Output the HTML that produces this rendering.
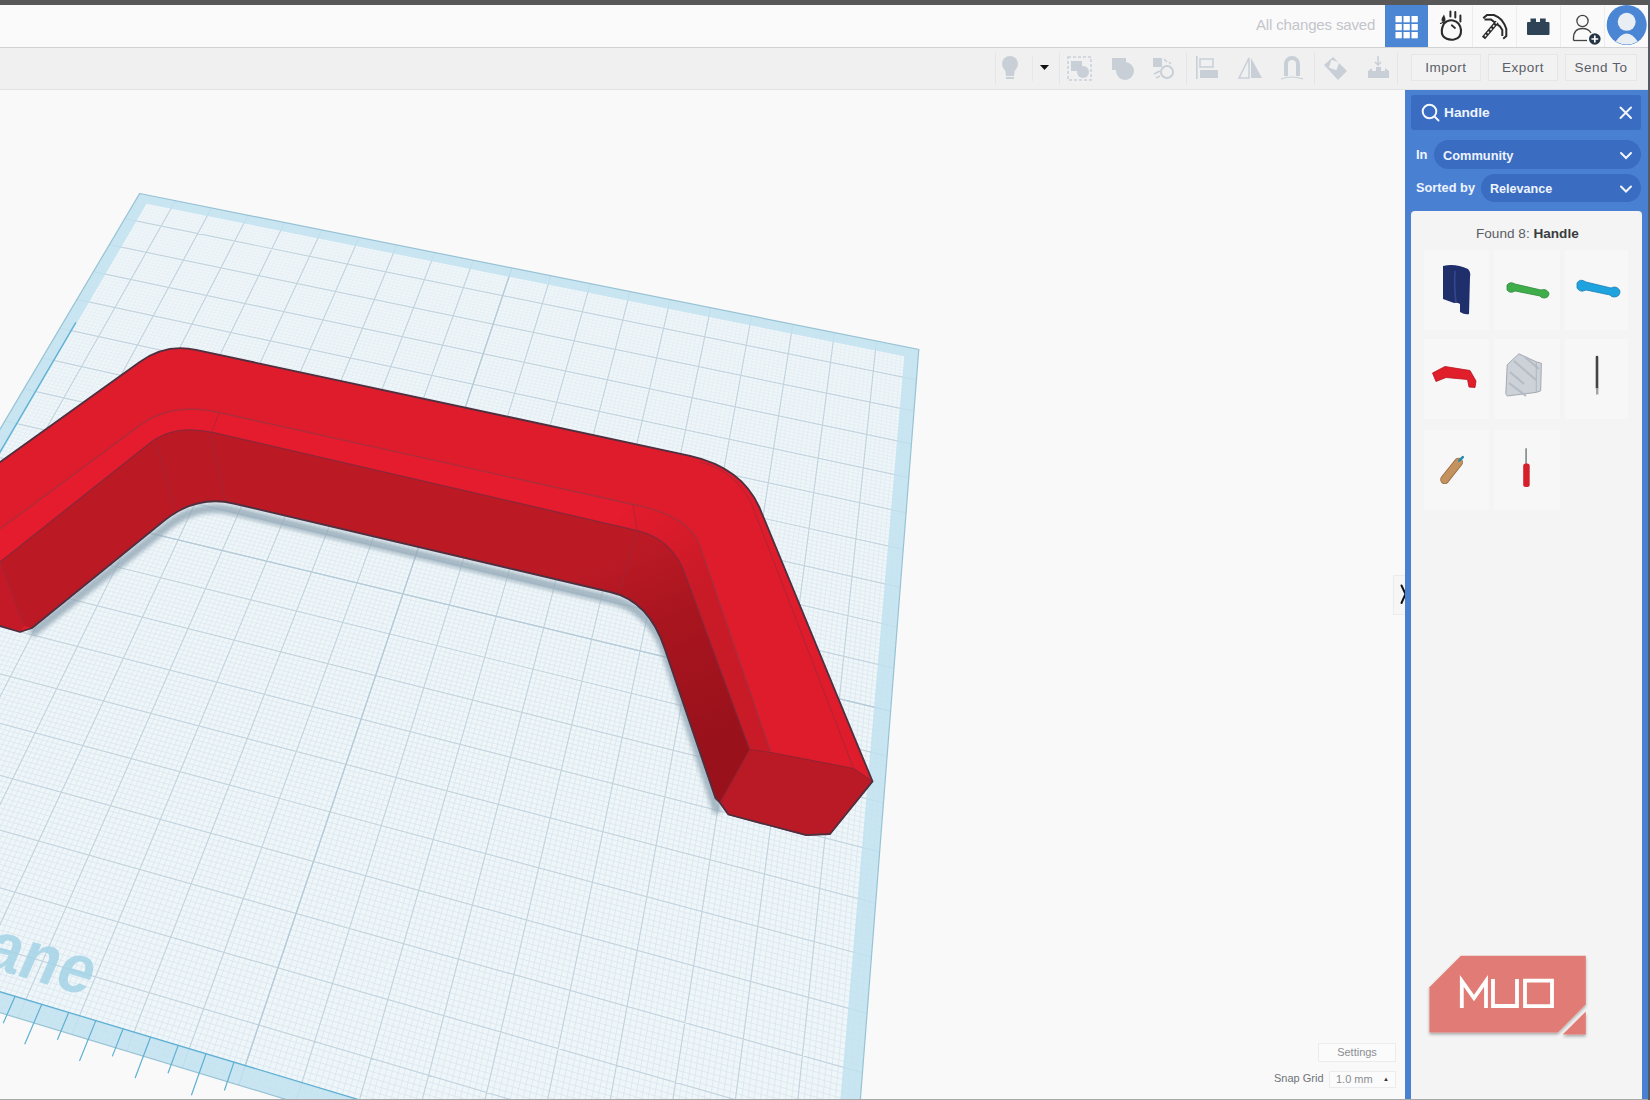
<!DOCTYPE html>
<html><head><meta charset="utf-8">
<style>
*{box-sizing:border-box;margin:0;padding:0}
html,body{width:1650px;height:1100px;overflow:hidden;background:#f9f9f9;font-family:"Liberation Sans",sans-serif}
.a{position:absolute;white-space:nowrap}
#top{left:0;top:0;width:1650px;height:5px;background:#585858}
#bar{left:0;top:5px;width:1650px;height:43px;background:#fafafa;border-bottom:1px solid #d2d2d5}
#tools{left:0;top:48px;width:1650px;height:42px;background:#f0f0f1;border-bottom:1px solid #e3e3e5}
.tb{top:54px;height:27px;border:1px solid #e6e6e8;background:#f2f2f3;font-size:13.5px;color:#5a5e66;text-align:center;line-height:25px;letter-spacing:0.5px}
#panel{left:1405px;top:90px;width:245px;height:1010px;background:#4a80d2;border-right:2px solid #3f6fbf}
.pill{background:#3a6cc1;border-radius:15px}
.wt{color:#eef4ff;font-weight:bold;font-size:13px}
#results{left:1411px;top:211px;width:231px;height:889px;background:#f4f4f5;border-radius:4px 4px 0 0}
</style></head><body>
<svg class="a" style="left:0;top:0" width="1650" height="1100" viewBox="0 0 1650 1100">
<defs>
<linearGradient id="fadeg" gradientUnits="userSpaceOnUse" x1="0" y1="190" x2="0" y2="750"><stop offset="0" stop-color="#fff" stop-opacity="0.3"/><stop offset="1" stop-color="#fff" stop-opacity="1"/></linearGradient>
<mask id="fade" maskUnits="userSpaceOnUse" x="-300" y="0" width="1300" height="1300"><rect x="-300" y="0" width="1300" height="1300" fill="url(#fadeg)"/></mask>
<filter id="blur2" x="-5%" y="-5%" width="110%" height="110%"><feGaussianBlur stdDeviation="2"/></filter>
<linearGradient id="wallg" gradientUnits="userSpaceOnUse" x1="610" y1="560" x2="690" y2="760">
<stop offset="0" stop-color="#bb1a25"/><stop offset="0.35" stop-color="#a9151f"/><stop offset="1" stop-color="#98111b"/>
</linearGradient>
<linearGradient id="bandg" gradientUnits="userSpaceOnUse" x1="625" y1="505" x2="700" y2="590">
<stop offset="0" stop-color="#e51c2d"/><stop offset="1" stop-color="#c81a27"/>
</linearGradient>
</defs>
<polygon points="139.7,193.5 918.8,349.4 847.1,1269.6 -293.0,923.8" fill="#eff6f9"/>
<path d="M143.3,194.2L-288.0,925.3M138.2,196.0L918.5,352.4M146.8,195.0L-283.1,926.8M136.8,198.5L918.3,355.4M150.4,195.7L-278.1,928.3M135.3,201.0L918.1,358.4M154.0,196.4L-273.0,929.8M133.8,203.5L917.8,361.4M157.6,197.1L-268.0,931.3M132.3,206.0L917.6,364.5M161.1,197.8L-263.0,932.9M130.8,208.5L917.4,367.5M164.7,198.5L-258.0,934.4M129.3,211.1L917.1,370.5M168.3,199.3L-253.0,935.9M127.8,213.6L916.9,373.6M171.9,200.0L-247.9,937.4M126.3,216.1L916.6,376.7M179.1,201.4L-237.8,940.5M123.3,221.3L916.2,382.9M182.7,202.1L-232.8,942.0M121.8,223.8L915.9,386.0M186.3,202.9L-227.7,943.6M120.2,226.4L915.7,389.1M189.9,203.6L-222.7,945.1M118.7,229.0L915.4,392.2M193.5,204.3L-217.6,946.7M117.2,231.6L915.2,395.3M197.1,205.0L-212.5,948.2M115.6,234.2L914.9,398.5M200.7,205.7L-207.4,949.7M114.1,236.8L914.7,401.7M204.3,206.5L-202.3,951.3M112.5,239.4L914.4,404.8M207.9,207.2L-197.2,952.8M111.0,242.0L914.2,408.0M215.2,208.6L-187.0,955.9M107.8,247.3L913.7,414.4M218.8,209.4L-181.9,957.5M106.2,250.0L913.4,417.6M222.5,210.1L-176.7,959.0M104.7,252.7L913.2,420.9M226.1,210.8L-171.6,960.6M103.1,255.3L912.9,424.1M229.7,211.5L-166.5,962.2M101.5,258.0L912.7,427.4M233.4,212.3L-161.3,963.7M99.9,260.7L912.4,430.6M237.0,213.0L-156.2,965.3M98.3,263.4L912.2,433.9M240.7,213.7L-151.0,966.8M96.7,266.1L911.9,437.2M244.3,214.5L-145.8,968.4M95.1,268.8L911.7,440.5M251.6,215.9L-135.5,971.6M91.8,274.3L911.1,447.2M255.3,216.7L-130.3,973.1M90.2,277.0L910.9,450.5M258.9,217.4L-125.1,974.7M88.6,279.8L910.6,453.9M262.6,218.1L-119.9,976.3M86.9,282.6L910.4,457.2M266.3,218.9L-114.7,977.9M85.3,285.3L910.1,460.6M270.0,219.6L-109.5,979.4M83.6,288.1L909.8,464.0M273.6,220.3L-104.3,981.0M82.0,290.9L909.6,467.4M277.3,221.1L-99.0,982.6M80.3,293.7L909.3,470.8M281.0,221.8L-93.8,984.2M78.7,296.5L909.0,474.2M288.4,223.3L-83.3,987.4M75.3,302.2L908.5,481.1M292.1,224.0L-78.1,989.0M73.6,305.0L908.2,484.6M295.8,224.8L-72.8,990.6M71.9,307.9L908.0,488.1M299.5,225.5L-67.5,992.2M70.2,310.8L907.7,491.6M303.2,226.2L-62.3,993.8M68.5,313.6L907.4,495.1M306.9,227.0L-57.0,995.4M66.8,316.5L907.1,498.6M310.6,227.7L-51.7,997.0M65.1,319.4L906.9,502.2M314.3,228.5L-46.4,998.6M63.4,322.3L906.6,505.7M318.0,229.2L-41.1,1000.2M61.7,325.2L906.3,509.3M325.4,230.7L-30.5,1003.4M58.2,331.1L905.8,516.4M329.2,231.4L-25.2,1005.0M56.5,334.0L905.5,520.0M332.9,232.2L-19.8,1006.6M54.7,337.0L905.2,523.7M336.6,232.9L-14.5,1008.3M52.9,339.9L904.9,527.3M340.4,233.7L-9.2,1009.9M51.2,342.9L904.6,530.9M344.1,234.4L-3.8,1011.5M49.4,345.9L904.3,534.6M347.8,235.2L1.6,1013.1M47.6,348.9L904.1,538.3M351.6,235.9L6.9,1014.8M45.9,351.9L903.8,542.0M355.3,236.7L12.3,1016.4M44.1,354.9L903.5,545.7M362.8,238.2L23.0,1019.6M40.5,361.0L902.9,553.1M366.6,238.9L28.4,1021.3M38.7,364.0L902.6,556.9M370.4,239.7L33.8,1022.9M36.9,367.1L902.3,560.6M374.1,240.4L39.2,1024.6M35.0,370.2L902.0,564.4M377.9,241.2L44.7,1026.2M33.2,373.2L901.7,568.2M381.7,241.9L50.1,1027.8M31.4,376.3L901.4,572.0M385.4,242.7L55.5,1029.5M29.5,379.4L901.1,575.8M389.2,243.5L60.9,1031.1M27.7,382.5L900.8,579.7M393.0,244.2L66.4,1032.8M25.8,385.7L900.5,583.5M400.6,245.7L77.3,1036.1M22.1,392.0L899.9,591.3M404.3,246.5L82.8,1037.8M20.2,395.1L899.6,595.2M408.1,247.2L88.2,1039.4M18.4,398.3L899.3,599.1M411.9,248.0L93.7,1041.1M16.5,401.5L899.0,603.0M415.7,248.8L99.2,1042.7M14.6,404.7L898.7,607.0M419.5,249.5L104.7,1044.4M12.7,407.9L898.4,611.0M423.4,250.3L110.2,1046.1M10.8,411.1L898.1,614.9M427.2,251.1L115.7,1047.7M8.9,414.3L897.8,618.9M431.0,251.8L121.2,1049.4M6.9,417.6L897.5,623.0M438.6,253.3L132.3,1052.8M3.1,424.1L896.8,631.0M442.4,254.1L137.8,1054.5M1.1,427.4L896.5,635.1M446.3,254.9L143.3,1056.1M-0.8,430.7L896.2,639.2M450.1,255.6L148.9,1057.8M-2.8,434.0L895.9,643.3M453.9,256.4L154.4,1059.5M-4.8,437.3L895.6,647.4M457.8,257.2L160.0,1061.2M-6.7,440.6L895.2,651.5M461.6,257.9L165.6,1062.9M-8.7,444.0L894.9,655.7M465.5,258.7L171.2,1064.6M-10.7,447.3L894.6,659.8M469.3,259.5L176.8,1066.3M-12.7,450.7L894.3,664.0M477.0,261.0L187.9,1069.7M-16.7,457.5L893.6,672.4M480.9,261.8L193.6,1071.4M-18.7,460.9L893.3,676.7M484.7,262.6L199.2,1073.1M-20.7,464.3L892.9,680.9M488.6,263.3L204.8,1074.8M-22.8,467.7L892.6,685.2M492.5,264.1L210.4,1076.5M-24.8,471.2L892.3,689.5M496.3,264.9L216.1,1078.2M-26.9,474.6L891.9,693.8M500.2,265.7L221.7,1079.9M-28.9,478.1L891.6,698.1M504.1,266.4L227.4,1081.6M-31.0,481.6L891.3,702.5M508.0,267.2L233.0,1083.3M-33.1,485.1L890.9,706.8M515.7,268.8L244.4,1086.8M-37.2,492.1L890.2,715.6M519.6,269.6L250.1,1088.5M-39.3,495.6L889.9,720.0M523.5,270.3L255.8,1090.2M-41.4,499.2L889.6,724.5M527.4,271.1L261.5,1092.0M-43.5,502.7L889.2,728.9M531.3,271.9L267.2,1093.7M-45.7,506.3L888.9,733.4M535.2,272.7L272.9,1095.4M-47.8,509.9L888.5,737.9M539.2,273.5L278.6,1097.2M-49.9,513.5L888.2,742.4M543.1,274.2L284.4,1098.9M-52.1,517.1L887.8,746.9M547.0,275.0L290.1,1100.7M-54.2,520.8L887.4,751.5M554.8,276.6L301.6,1104.1M-58.6,528.1L886.7,760.7M558.8,277.4L307.4,1105.9M-60.7,531.8L886.4,765.3M562.7,278.2L313.1,1107.6M-62.9,535.5L886.0,769.9M566.6,279.0L318.9,1109.4M-65.1,539.2L885.6,774.6M570.6,279.7L324.7,1111.2M-67.3,542.9L885.3,779.2M574.5,280.5L330.5,1112.9M-69.5,546.6L884.9,783.9M578.4,281.3L336.3,1114.7M-71.8,550.4L884.6,788.7M582.4,282.1L342.1,1116.4M-74.0,554.1L884.2,793.4M586.4,282.9L347.9,1118.2M-76.2,557.9L883.8,798.2M594.3,284.5L359.6,1121.7M-80.7,565.5L883.1,807.7M598.2,285.3L365.4,1123.5M-83.0,569.3L882.7,812.6M602.2,286.1L371.3,1125.3M-85.3,573.2L882.3,817.4M606.2,286.9L377.1,1127.1M-87.6,577.0L881.9,822.3M610.1,287.7L383.0,1128.8M-89.9,580.9L881.6,827.2M614.1,288.5L388.9,1130.6M-92.2,584.8L881.2,832.1M618.1,289.3L394.8,1132.4M-94.5,588.7L880.8,837.0M622.1,290.1L400.7,1134.2M-96.8,592.6L880.4,842.0M626.1,290.9L406.6,1136.0M-99.1,596.6L880.0,846.9M634.1,292.5L418.4,1139.6M-103.8,604.5L879.2,857.0M638.1,293.3L424.3,1141.4M-106.2,608.5L878.8,862.0M642.1,294.1L430.2,1143.2M-108.6,612.5L878.4,867.1M646.1,294.9L436.2,1145.0M-110.9,616.5L878.0,872.2M650.1,295.7L442.1,1146.8M-113.3,620.5L877.6,877.3M654.1,296.5L448.1,1148.6M-115.7,624.6L877.2,882.4M658.1,297.3L454.0,1150.4M-118.1,628.6L876.8,887.6M662.1,298.1L460.0,1152.2M-120.6,632.7L876.4,892.8M666.2,298.9L466.0,1154.0M-123.0,636.8L876.0,898.0M674.2,300.5L478.0,1157.6M-127.9,645.1L875.2,908.5M678.3,301.3L484.0,1159.5M-130.3,649.2L874.8,913.8M682.3,302.1L490.0,1161.3M-132.8,653.4L874.4,919.1M686.3,302.9L496.0,1163.1M-135.3,657.6L874.0,924.4M690.4,303.7L502.0,1164.9M-137.8,661.8L873.6,929.8M694.4,304.5L508.1,1166.8M-140.3,666.0L873.1,935.2M698.5,305.3L514.1,1168.6M-142.8,670.2L872.7,940.6M702.5,306.2L520.2,1170.4M-145.3,674.5L872.3,946.1M706.6,307.0L526.3,1172.3M-147.8,678.8L871.9,951.5M714.7,308.6L538.4,1176.0M-152.9,687.4L871.0,962.5M718.8,309.4L544.5,1177.8M-155.5,691.7L870.6,968.1M722.9,310.2L550.6,1179.7M-158.1,696.1L870.1,973.6M727.0,311.0L556.7,1181.5M-160.7,700.4L869.7,979.2M731.0,311.9L562.8,1183.4M-163.3,704.8L869.3,984.9M735.1,312.7L568.9,1185.2M-165.9,709.2L868.8,990.5M739.2,313.5L575.1,1187.1M-168.5,713.6L868.4,996.2M743.3,314.3L581.2,1189.0M-171.1,718.1L867.9,1001.9M747.4,315.1L587.4,1190.8M-173.8,722.5L867.5,1007.6M755.6,316.8L599.7,1194.6M-179.1,731.5L866.6,1019.2M759.7,317.6L605.9,1196.4M-181.8,736.1L866.1,1025.0M763.9,318.4L612.0,1198.3M-184.5,740.6L865.7,1030.9M768.0,319.2L618.2,1200.2M-187.2,745.2L865.2,1036.7M772.1,320.1L624.4,1202.1M-189.9,749.7L864.8,1042.6M776.2,320.9L630.6,1204.0M-192.6,754.3L864.3,1048.6M780.3,321.7L636.9,1205.8M-195.4,759.0L863.8,1054.5M784.5,322.5L643.1,1207.7M-198.1,763.6L863.4,1060.5M788.6,323.4L649.3,1209.6M-200.9,768.3L862.9,1066.6M796.9,325.0L661.8,1213.4M-206.4,777.6L862.0,1078.7M801.0,325.9L668.1,1215.3M-209.2,782.4L861.5,1084.8M805.2,326.7L674.4,1217.2M-212.1,787.1L861.0,1091.0M809.4,327.5L680.6,1219.1M-214.9,791.9L860.5,1097.2M813.5,328.4L686.9,1221.0M-217.7,796.7L860.0,1103.4M817.7,329.2L693.2,1222.9M-220.6,801.5L859.6,1109.6M821.8,330.0L699.5,1224.9M-223.4,806.3L859.1,1115.9M826.0,330.9L705.8,1226.8M-226.3,811.2L858.6,1122.2M830.2,331.7L712.2,1228.7M-229.2,816.0L858.1,1128.5M838.5,333.4L724.8,1232.5M-235.0,825.9L857.1,1141.3M842.7,334.2L731.2,1234.5M-237.9,830.8L856.6,1147.7M846.9,335.0L737.6,1236.4M-240.9,835.8L856.1,1154.2M851.1,335.9L743.9,1238.3M-243.8,840.8L855.6,1160.7M855.3,336.7L750.3,1240.3M-246.8,845.8L855.1,1167.3M859.5,337.6L756.7,1242.2M-249.8,850.8L854.6,1173.8M863.7,338.4L763.1,1244.1M-252.8,855.8L854.0,1180.4M867.9,339.2L769.5,1246.1M-255.8,860.9L853.5,1187.1M872.1,340.1L775.9,1248.0M-258.8,866.0L853.0,1193.8M880.6,341.8L788.8,1251.9M-264.9,876.3L852.0,1207.2M884.8,342.6L795.2,1253.9M-268.0,881.5L851.4,1214.0M889.0,343.5L801.7,1255.8M-271.1,886.7L850.9,1220.8M893.3,344.3L808.1,1257.8M-274.1,891.9L850.4,1227.7M897.5,345.2L814.6,1259.8M-277.3,897.2L849.8,1234.6M901.8,346.0L821.1,1261.7M-280.4,902.4L849.3,1241.5M906.0,346.9L827.6,1263.7M-283.5,907.7L848.7,1248.5M910.2,347.7L834.1,1265.7M-286.7,913.0L848.2,1255.5M914.5,348.6L840.6,1267.6M-289.8,918.4L847.6,1262.5" stroke="#d9e6ee" stroke-width="0.8" fill="none" mask="url(#fade)"/>
<path d="M175.5,200.7L-242.9,939.0M124.8,218.7L916.4,379.8M211.6,207.9L-192.1,954.4M109.4,244.7L913.9,411.2M248.0,215.2L-140.7,970.0M93.5,271.6L911.4,443.8M284.7,222.5L-88.6,985.8M77.0,299.4L908.8,477.7M321.7,230.0L-35.8,1001.8M59.9,328.1L906.0,512.8M359.1,237.4L17.7,1018.0M42.3,357.9L903.2,549.4M396.8,245.0L71.8,1034.4M24.0,388.8L900.2,587.4M434.8,252.6L126.7,1051.1M5.0,420.8L897.1,627.0M473.2,260.3L182.3,1068.0M-14.7,454.1L893.9,668.2M511.9,268.0L238.7,1085.1M-35.1,488.6L890.6,711.2M550.9,275.8L295.8,1102.4M-56.4,524.4L887.1,756.1M590.3,283.7L353.8,1120.0M-78.5,561.7L883.4,802.9M630.1,291.7L412.5,1137.8M-101.5,600.5L879.6,851.9M670.2,299.7L472.0,1155.8M-125.4,640.9L875.6,903.2M710.7,307.8L532.3,1174.1M-150.4,683.1L871.4,957.0M751.5,316.0L593.5,1192.7M-176.4,727.0L867.0,1013.4M792.8,324.2L655.6,1211.5M-203.7,772.9L862.4,1072.6M834.4,332.5L718.5,1230.6M-232.1,820.9L857.6,1134.9M876.4,340.9L782.3,1250.0M-261.9,871.2L852.5,1200.5" stroke="#c3d4df" stroke-width="1.2" fill="none"/>
<path d="M511.9,268.0L238.7,1085.1M-35.1,488.6L890.6,711.2" stroke="#b5cbd8" stroke-width="1.3" fill="none"/>
<path d="M139.7,193.5L918.8,349.4L847.1,1269.6L-293.0,923.8Z M146.5,203.8L-267.0,911.4L828.2,1240.9L904.3,356.3Z" fill="#bfe1f0" fill-opacity="0.8" fill-rule="evenodd"/>
<polygon points="139.7,193.5 918.8,349.4 847.1,1269.6 -293.0,923.8" fill="none" stroke="#98c3d4" stroke-width="1.2"/>
<path d="M75.9,322.4L-278.6,928.2M-268.5,911.0L848.8,1247.1" stroke="#5fb0d3" stroke-width="1.3" fill="none"/>
<path d="M-292.8,903.7L-307.6,928.5M-268.0,911.1L-289.5,947.9M-243.1,918.6L-257.5,943.8M-218.0,926.2L-238.8,963.5M-192.8,933.8L-206.7,959.3M-167.4,941.4L-187.5,979.2M-141.8,949.1L-155.2,974.9M-116.1,956.8L-135.5,995.1M-90.2,964.6L-103.1,990.8M-64.1,972.5L-82.8,1011.3M-37.9,980.4L-50.3,1006.9M-11.5,988.3L-29.4,1027.6M15.1,996.3L3.2,1023.2M41.8,1004.3L24.7,1044.2M68.7,1012.4L57.4,1039.7M95.8,1020.6L79.5,1061.0M123.1,1028.8L112.3,1056.4M150.6,1037.0L135.1,1078.0M178.2,1045.4L168.0,1073.3M206.0,1053.7L191.4,1095.2M234.0,1062.1L224.4,1090.5" stroke="#5fb0d3" stroke-width="1.2" fill="none"/>
<g transform="matrix(5.26791,1.55681,-2.42862,5.55257,42.55,961.12)"><text x="-49.3" y="3.5" font-family="Liberation Sans" font-weight="bold" font-size="11.6" fill="#a3d2e6" fill-opacity="0.85">Workplane</text></g>
<path d="M718,813 L665.5,652 Q649.5,607.5 610,599.5 L232,510.5 Q197,502.5 167.5,526 L31,634" fill="none" stroke="#8ea3b1" stroke-width="9" stroke-opacity="0.75" stroke-linejoin="round" filter="url(#blur2)"/>
<path d="M-10,469.2 L139.7,362 Q165.6,343.4 196,349.9 L690,455.8 Q741.4,467.2 759.3,507.1 L872.5,781.4 L830,834 L806.3,835.2 L728.4,814.5 L720,802.7 L715.4,798 L665,649.5 Q649.4,600.9 610,592 L233.6,503.5 Q197.2,494.8 165,520 L32,628 L20,632 L-10,623 Z" fill="#de1c2b"/>
<path d="M0,529 L140,425.4 Q171.6,402 219,412.5 L640,506 Q690,517.1 700,546 L770.9,752.5 L749.6,749.5 L682,566.6 Q668,538 637.3,530.6 L212.7,432.4 Q174.1,423.9 150,443 L0,562 Z" fill="url(#bandg)"/>
<path d="M0,562 L150,443 Q174.1,423.9 212.7,432.4 L637.3,530.6 Q668,538 682,566.6 L749.6,749.5 L720,802.7 L715.4,798 L665,649.5 Q649.4,600.9 610,592 L233.6,503.5 Q197.2,494.8 165,520 L32,628 L24,626 Z" fill="url(#wallg)"/>
<polygon points="0,562 24,626 20,632 0,626" fill="#c41a27"/>
<polygon points="749.6,749.5 770.9,752.5 853.6,768.4 872.5,781.4 830,834 806.3,835.2 728.4,814.5 720,802.7" fill="#b91a25"/>
<path d="M0,529 L140,425.4 Q171.6,402 219,412.5 L640,506 Q690,517.1 700,546 L770.9,752.5" fill="none" stroke="#a5303e" stroke-width="1.4" stroke-opacity="0.85"/>
<path d="M0,562 L150,443 Q174.1,423.9 212.7,432.4 L637.3,530.6 Q668,538 682,566.6 L749.6,749.5" fill="none" stroke="#85283a" stroke-width="1.3" stroke-opacity="0.9"/>
<polyline points="749.6,749.5 770.9,752.5 853.6,768.4 872.5,781.4 830,834 806.3,835.2 728.4,814.5 720,802.7 749.6,749.5" fill="none" stroke="#8f2533" stroke-width="1.1" stroke-opacity="0.9"/>
<path d="M156.3,443L175,509.8M210.6,432.4L225.3,501.4M219,412.5L212,432M632.9,504.4L637.3,530.6L619.8,591.7M0,562L24,626M700,462 Q736,471 752,505 L853.6,768.4" stroke="#9a2a3a" stroke-width="1" fill="none" stroke-opacity="0.7"/>
<path d="M-10,469.2 L139.7,362 Q165.6,343.4 196,349.9 L690,455.8 Q741.4,467.2 759.3,507.1 L872.5,781.4 L830,834 L806.3,835.2 L728.4,814.5 L720,802.7 L715.4,798 L665,649.5 Q649.4,600.9 610,592 L233.6,503.5 Q197.2,494.8 165,520 L32,628 L20,632 L-10,623 Z" fill="none" stroke="#4e3040" stroke-width="1.8" stroke-linejoin="round"/>
</svg>
<div class="a" id="top"></div>
<div class="a" id="bar"></div>
<div class="a" style="left:1256px;top:16px;font-size:15px;color:#c3c5cb;letter-spacing:-0.15px">All changes saved</div>

<svg style="position:absolute;left:0;top:0" width="1650" height="48">
<rect x="1385" y="5" width="43" height="42" fill="#4a86d4"/>
<g fill="#ffffff">
<rect x="1395.5" y="16" width="6.3" height="6.3"/><rect x="1403.5" y="16" width="6.3" height="6.3"/><rect x="1411.5" y="16" width="6.3" height="6.3"/>
<rect x="1395.5" y="24" width="6.3" height="6.3"/><rect x="1403.5" y="24" width="6.3" height="6.3"/><rect x="1411.5" y="24" width="6.3" height="6.3"/>
<rect x="1395.5" y="32" width="6.3" height="6.3"/><rect x="1403.5" y="32" width="6.3" height="6.3"/><rect x="1411.5" y="32" width="6.3" height="6.3"/>
</g>
<path d="M1472.5,6V47M1516.5,6V47M1560.5,6V47M1604.5,6V47" stroke="#ececee" stroke-width="1"/>
<g fill="none" stroke="#2b2b2b" stroke-linecap="round">
<path d="M1444,23.5 Q1448,19.5 1453,20.5 Q1460,22 1461,30 Q1461.5,38 1454,39.5 Q1447,40.5 1443,36 Q1440,31 1444,23.5Z" stroke-width="2.1"/>
<path d="M1451.8,25.3L1455,28" stroke-width="1.8"/>
<path d="M1450.4,11.5v5M1455.3,12v5.5M1460.4,15.5v6" stroke-width="2"/>
<path d="M1440.5,23.5l3.5,-1.5" stroke-width="1.2"/>
<path d="M1484,17.5 L1487,15 H1494 L1498,17 L1501.5,20 L1504.5,24.5 L1506.3,29 V36 L1504,38 M1485.5,19.5 H1491 L1500,26.5 L1502.3,30 V35" stroke-width="2" stroke-linecap="square" stroke-linejoin="miter"/>
<path d="M1497,22 L1483.5,38" stroke-width="4.2" stroke-linecap="butt"/>
<path d="M1497,22 L1483.5,38" stroke="#fafafa" stroke-width="1.5" stroke-dasharray="2 2.2" stroke-linecap="butt"/>
</g>
<path d="M1444,14.5q-2.5,3.5 -2.5,5.5q0,2 2,2q2,0 2,-2q0,-2 -1.5,-5.5z" fill="#2b2b2b"/>
<g fill="#2f4356"><rect x="1527" y="22" width="22.5" height="13" rx="1"/><rect x="1530.5" y="18.5" width="5.5" height="4"/><rect x="1540" y="18.5" width="5.7" height="4"/></g>
<g fill="none" stroke="#444" stroke-width="1.3"><circle cx="1582.5" cy="21" r="5.6"/><path d="M1573.5,40.5v-2q0,-10 9,-10q6,0 8.5,4.5"/><path d="M1573.5,40.5h13.5"/></g>
<circle cx="1594.8" cy="39" r="5.8" fill="#243444"/><path d="M1594.8,35.6v6.8M1591.4,39h6.8" stroke="#fff" stroke-width="1.7"/>
<circle cx="1626.7" cy="25" r="20" fill="#4a86d4"/>
<circle cx="1626.7" cy="21.8" r="9" fill="#e9eef5"/>
<path d="M1615.7,41.5 q11,-16 22,0 q-11,6 -22,0z" fill="#e9eef5"/>
</svg>
<div class="a" id="tools"></div>

<svg style="position:absolute;left:0;top:48px" width="1650" height="41">
<g stroke="#e6e6e8" stroke-width="1">
<path d="M995.5,4V37M1032.5,8V33M1059.5,4V37M1186.5,4V37M1314.5,4V37M1397.5,4V37"/>
</g>
<g fill="#c8cfd6">
<circle cx="1010" cy="16" r="8"/><path d="M1005,20h10l-1,8h-8z"/><rect x="1006" y="29" width="8" height="2"/>
<path d="M1040,17h9l-4.5,5z" fill="#111"/>
</g>
<g fill="none" stroke="#c8cfd6" stroke-width="1.5" stroke-dasharray="3 2"><rect x="1068" y="9" width="23" height="23"/></g>
<g fill="#c8cfd6"><rect x="1071" y="13" width="11" height="10"/><circle cx="1083" cy="24" r="6"/>
<rect x="1112" y="10" width="14" height="12"/><circle cx="1125" cy="23" r="9"/>
<rect x="1153" y="10" width="9" height="9"/><circle cx="1167" cy="24" r="6" fill="none" stroke="#c8cfd6" stroke-width="2"/><path d="M1154,26l6,-3M1156,30l4,-2M1164,11l3,3M1169,14l2,2" stroke="#c8cfd6" stroke-width="1.5"/>
<rect x="1196" y="8" width="1.6" height="23"/><rect x="1200" y="11" width="13" height="8" fill="none" stroke="#c8cfd6" stroke-width="1.5"/><rect x="1200" y="22" width="18" height="8"/>
<path d="M1249,10v20h-10z" fill="none" stroke="#c8cfd6" stroke-width="1.5"/><path d="M1251,10v20h11z"/>
<path d="M1284,28v-12a8,8 0 0 1 16,0v12h-4v-12a4,4 0 0 0 -8,0v12z"/><path d="M1281,31q10,-4 22,0" fill="none" stroke="#c8cfd6" stroke-width="1.2"/>
<path d="M1324,17l9,-8l14,14l-9,9z"/><rect x="1330" y="13" width="8" height="8" fill="#f0f0f1" transform="rotate(20 1334 17)"/>
<path d="M1368,30h21v-7l-4,-3v3h-4v-4h-5v4h-4v-3l-4,3z"/><path d="M1378,8v9l-3,-3M1378,17l3,-3" stroke="#c8cfd6" stroke-width="1.5" fill="none"/>
</g>
</svg>
<div class="a tb" style="left:1411px;width:70px">Import</div>
<div class="a tb" style="left:1488px;width:70px">Export</div>
<div class="a tb" style="left:1565px;width:72px">Send To</div>
<div class="a" style="left:1393px;top:575px;width:12px;height:40px;background:#f6f6f7;border:1px solid #ececee;border-right:none"></div>
<svg class="a" style="left:1398px;top:583px" width="12" height="24"><path d="M3.5,2.5L7.5,11L3.5,20" fill="none" stroke="#111" stroke-width="2" stroke-linecap="round"/></svg>
<div class="a" id="panel"></div>
<div class="a" style="left:1411px;top:95px;width:230px;height:35px;background:#3a6cc2;border-radius:3px"></div>

<div class="a wt" style="left:1444px;top:105px;font-size:13.7px">Handle</div>
<div class="a pill" style="left:1434px;top:140px;width:207px;height:29px"></div>
<div class="a pill" style="left:1481px;top:174px;width:160px;height:28px"></div>
<div class="a wt" style="left:1416px;top:147px">In</div>
<div class="a wt" style="left:1443px;top:148px;font-size:12.8px">Community</div>
<div class="a wt" style="left:1416px;top:180px;font-size:12.8px">Sorted by</div>
<div class="a wt" style="left:1490px;top:181.5px;font-size:12.6px">Relevance</div>
<svg class="a" style="left:1405px;top:90px" width="245" height="120" viewBox="1405 90 245 120">
<g fill="none" stroke="#f2f6ff" stroke-width="2" stroke-linecap="round">
<circle cx="1429.5" cy="111.5" r="6.8"/><path d="M1434.5,116.5L1438.5,120.5"/>
<path d="M1620.5,107.5L1631,118M1631,107.5L1620.5,118"/>
<path d="M1621,153L1626,158L1631,153M1621,186.5L1626,191.5L1631,186.5"/>
</g></svg>
<div class="a" id="results"></div>
<div class="a" style="left:1476px;top:225.5px;font-size:13.6px;color:#5b5e63">Found 8: <b style="color:#3a3c40">Handle</b></div>

<svg style="position:absolute;left:1405px;top:205px" width="245" height="320" viewBox="1405 205 245 320">
<g fill="#f7f7f8">
<rect x="1424" y="250" width="65" height="80"/><rect x="1494" y="250" width="66" height="80"/><rect x="1565" y="250" width="63" height="80"/>
<rect x="1424" y="339" width="65" height="80"/><rect x="1494" y="339" width="66" height="80"/><rect x="1565" y="339" width="63" height="80"/>
<rect x="1424" y="430" width="65" height="80"/><rect x="1494" y="430" width="66" height="80"/>
</g>
<path d="M1443,266 q12,-3 25,3 q3,3 2,8 l-1,37 q-4,1 -9,-2 l0,-8 q-3,-2 -6,-1 l-11,-4z" fill="#1f2f6c"/>
<path d="M1455,271q-1,15 1,32" stroke="#33488c" stroke-width="1.6" fill="none"/>
<path d="M1507,285 q3,-4 8,-1 l26,6 q5,-2 8,3 q0,5 -5,5 q-3,0 -4,-2 l-25,-5 q-5,3 -8,-1z" fill="#3fae4a" stroke="#2f8a3a" stroke-width="0.8"/>
<path d="M1577,283 q3,-5 9,-1 l25,6 q6,-3 9,3 q0,6 -6,6 q-3,0 -4,-2 l-24,-5 q-6,3 -9,-2z" fill="#1ea3df" stroke="#1b7fb5" stroke-width="0.8"/>
<path d="M1432.5,373 L1445,366.5 L1470,370.5 L1476,381 L1475,387.5 L1469,387 L1467.5,379.5 L1446,377.5 L1436,381.5 Z" fill="#e01f2b" stroke="#b8121e" stroke-width="0.8" stroke-linejoin="round"/>
<path d="M1507.2,364.7 L1518.9,353.8 L1536.3,361.8 L1541.4,363.3 L1540.7,390.9 L1536.3,392.4 L1507.2,396 L1505.8,393.8 Z" fill="#cdd1d8" stroke="#9ea4ae" stroke-width="0.9" stroke-linejoin="round"/>
<path d="M1510,372l14,12M1509,383l17,13M1514,361l22,19M1525,357l14,12" stroke="#b6bcc6" stroke-width="2.2"/>
<path d="M1536.3,362v30" stroke="#aab0ba" stroke-width="0.8"/>
<path d="M1597,357v31" stroke="#444" stroke-width="2.6" stroke-linecap="round"/><path d="M1597.2,388v6.5" stroke="#a0a4a8" stroke-width="2.4"/>
<path d="M1444.7,479.6 L1458.5,462.2" stroke="#9a6c40" stroke-width="9" stroke-linecap="round"/><path d="M1444.7,479.6 L1458.5,462.2" stroke="#c4925e" stroke-width="7.3" stroke-linecap="round"/>
<path d="M1459.2,460.7 L1462.8,457.1" stroke="#2a8aa8" stroke-width="2.6" stroke-linecap="round"/>
<path d="M1526.1,448.3v16" stroke="#8e9496" stroke-width="1.8"/>
<rect x="1523.2" y="463.6" width="6.5" height="23.3" rx="2.5" fill="#d5202b"/>
</svg>

<svg style="position:absolute;left:1420px;top:950px" width="180" height="95" viewBox="1420 950 180 95">
<defs><filter id="sh" x="-10%" y="-10%" width="120%" height="130%"><feDropShadow dx="0" dy="2" stdDeviation="1.5" flood-color="#000" flood-opacity="0.3"/></filter></defs>
<g filter="url(#sh)" fill="#e07c74">
<path d="M1460.9,955.8H1585.8V1004.2L1557.9,1032.5H1429.4V987.3Z"/>
<path d="M1585.8,1011.5V1034.5H1562.7Z"/>
</g>
<g fill="none" stroke="#ffffff" stroke-width="3.8" stroke-linecap="butt">
<path d="M1461.8,1008V981L1474,998L1486,981V1008"/>
<path d="M1493,979V1006H1517V979"/>
<path d="M1525,980.6H1552V1006.2H1525Z"/>
</g>
</svg>
<div class="a" style="left:1318px;top:1043px;width:78px;height:19px;background:#fbfbfb;border:1px solid #ececee;font-size:11px;color:#8a8d92;text-align:center;line-height:17px">Settings</div>
<div class="a" style="left:1274px;top:1072px;font-size:11px;color:#6f737a">Snap Grid</div>
<div class="a" style="left:1329px;top:1071px;width:67px;height:17px;background:#fbfbfb;border:1px solid #ececee;font-size:11px;color:#8a8d92;line-height:15px;padding-left:6px">1.0 mm<span style="position:absolute;left:53px;top:0;font-size:6px;color:#333">&#9650;</span></div>
<div class="a" style="left:0;top:1099px;width:1650px;height:1px;background:#a8a8a8"></div>
<div class="a" style="left:1648px;top:0;width:2px;height:1100px;background:#555a64"></div>
<svg class="a" style="left:1640px;top:5px" width="10" height="10"><path d="M4,0H10V10A6,6 0 0 0 4,0Z" fill="#575757"/></svg>
</body></html>
